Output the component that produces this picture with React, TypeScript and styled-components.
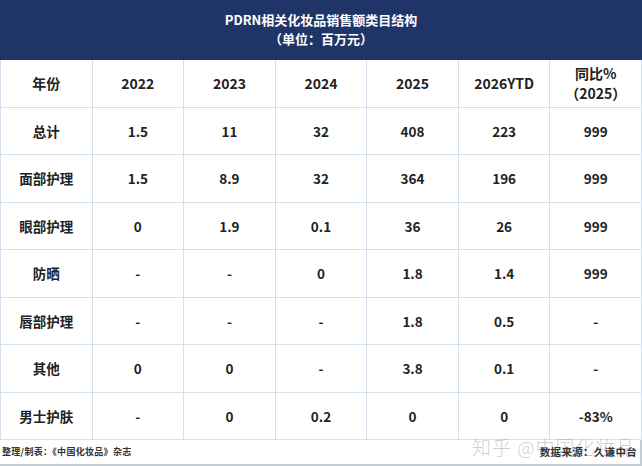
import styled, { createGlobalStyle } from "styled-components";

const GlobalStyle = createGlobalStyle`
    html, body {
        margin: 0;
        padding: 0;
        background: #ffffff;
    }
    body {
        font-family: "Noto Sans CJK SC", "Noto Sans", sans-serif;
        color: #222;
    }
`;

const Page = styled.div`
    width: 642px;
    height: 466px;
    overflow: hidden;
    background: #fff;
    display: flex;
    flex-direction: column;
`;

const Banner = styled.header`
    height: 60px;
    background: #1f3567;
    color: #fff;
    display: flex;
    flex-direction: column;
    align-items: center;
    justify-content: center;
    font-size: 13px;
    font-weight: 700;
    line-height: 19px;
    padding-bottom: 2px;
    box-sizing: border-box;
`;

const Grid = styled.div`
    display: grid;
    grid-template-columns: repeat(7, 1fr);
    grid-auto-rows: 47.5px;
    border-left: 1px solid #d3dfec;
`;

const Cell = styled.div<{ $head?: boolean }>`
    display: flex;
    align-items: center;
    justify-content: center;
    text-align: center;
    border-right: 1px solid #d3dfec;
    border-bottom: 1px solid #d3dfec;
    font-size: ${(p) => (p.$head ? "14px" : "13.5px")};
    font-weight: 600;
    line-height: 20px;
    color: #222;
`;

const Footer = styled.footer`
    position: relative;
    flex: 1;
    display: flex;
    align-items: center;
    justify-content: space-between;
    padding: 0 3px 2px 2px;
    border-bottom: 2px solid #c6ccd4;
    border-right: 2px solid #c6ccd4;
    font-weight: 700;
    color: #333;
`;

const Note = styled.span<{ $size: number }>`
    position: relative;
    z-index: 1;
    font-size: ${(p) => p.$size}px;
    letter-spacing: 0.3px;
`;

const Watermark = styled.span`
    position: absolute;
    left: 472px;
    top: -7px;
    font-size: 19px;
    font-weight: 300;
    color: rgba(160, 160, 160, 0.5);
    letter-spacing: 1px;
    white-space: nowrap;
    pointer-events: none;
`;

const headers = ["年份", "2022", "2023", "2024", "2025", "2026YTD"];

const rows: string[][] = [
    ["总计", "1.5", "11", "32", "408", "223", "999"],
    ["面部护理", "1.5", "8.9", "32", "364", "196", "999"],
    ["眼部护理", "0", "1.9", "0.1", "36", "26", "999"],
    ["防晒", "-", "-", "0", "1.8", "1.4", "999"],
    ["唇部护理", "-", "-", "-", "1.8", "0.5", "-"],
    ["其他", "0", "0", "-", "3.8", "0.1", "-"],
    ["男士护肤", "-", "0", "0.2", "0", "0", "-83%"],
];

export default function App() {
    return (
        <Page>
            <GlobalStyle />
            <Banner>
                <span>PDRN相关化妆品销售额类目结构</span>
                <span>（单位：百万元）</span>
            </Banner>
            <Grid>
                {headers.map((h) => (
                    <Cell key={h} $head>
                        {h}
                    </Cell>
                ))}
                <Cell $head>
                    同比%
                    <br />
                    （2025）
                </Cell>
                {rows.map((row) =>
                    row.map((v, i) => <Cell key={row[0] + i}>{v}</Cell>)
                )}
            </Grid>
            <Footer>
                <Note $size={9}>整理/制表：《中国化妆品》杂志</Note>
                <Note $size={10.5}>数据来源：久谦中台</Note>
                <Watermark>知乎 @中国化妆品</Watermark>
            </Footer>
        </Page>
    );
}
